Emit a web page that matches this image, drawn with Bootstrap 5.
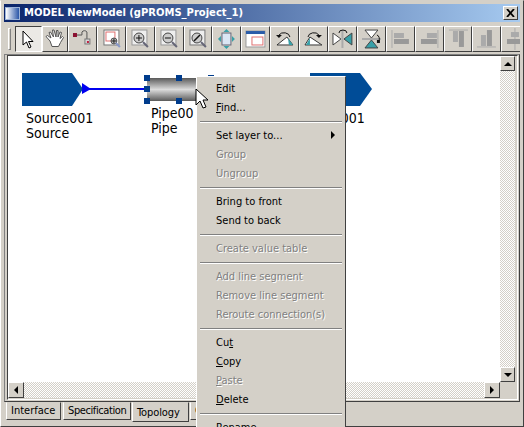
<!DOCTYPE html>
<html lang="en">
<head>
    <meta charset="UTF-8">
    <title>MODEL NewModel</title>
    <link href="https://cdn.jsdelivr.net/npm/bootstrap@5.3.3/dist/css/bootstrap.min.css" rel="stylesheet">
    <style>
        html, body { width: 524px; height: 427px; overflow: hidden; }
        body { background: #d4d0c8; font-family: "DejaVu Sans Condensed", "DejaVu Sans", sans-serif; font-size: 11px; color: #000; }
        .win { width: 524px; height: 427px; padding: 3px 3px 1px 3px; border: 1px solid; border-color: #d4d0c8 #404040 #404040 #fff; position: relative; overflow: hidden; }
        .win-title { height: 18px; padding: 0 2px 0 1px; flex: none; background: linear-gradient(90deg, #0a246a, #a6caf0); color: #fff; font-weight: 700; font-size: 11.1px; white-space: nowrap; }
        .win-ico { width: 15px; height: 13px; border: 1px solid #9db4d8; background: linear-gradient(90deg, #fff, #2a56a8); }
        .win-close { width: 15px; height: 14px; background: #d4d0c8; border: 1px solid; border-color: #fff #404040 #404040 #fff; }
        .tb { height: 32px; padding: 4px 0 2px 4px; flex: none; overflow: hidden; }
        .tb-grip { width: 3px; height: 22px; margin: 2px 4px 0 0; border: 1px solid; border-color: #fff #808080 #808080 #fff; flex: none; }
        .tb-btn { width: 28.9px; height: 26px; flex: none; display: flex; align-items: center; justify-content: center; overflow: hidden; border: 1px solid; border-color: #fff #404040 #404040 #fff; }
        .tb-on { width: 27px; background: #ebe9e5; border-color: #404040 #fff #fff #404040; }
        .tb-hand { width: 26px; }
        .panel { height: 348px; flex: none; padding: 0 1px 1px 2px; border: 1px solid; border-color: #808080 #404040 #404040 #808080; }
        .panel-in { height: 100%; padding: 0 2px 1px 0; border: 1px solid; border-color: #404040 #fff #fff #404040; background: #d4d0c8; position: relative; }
        .canvas { flex: 1 1 auto; background: #fff; position: relative; min-width: 0; overflow: hidden; }
        .sb-v { width: 15px; flex: none; background: #fff; }
        .sb-h { height: 16px; flex: none; }
        .sb-track { flex: 1 1 auto; background: repeating-conic-gradient(#d4d0c8 0 25%, #fff 0 50%) 0 0 / 2px 2px; }
        .sb-btn { width: 16px; height: 15px; flex: none; background: #d4d0c8; border: 1px solid; border-color: #fff #404040 #404040 #fff; }
        .sb-btn-h { height: 16px; }
        .sb-corner { width: 15px; background: #d4d0c8; flex: none; }
        .node-arrow { position: absolute; left: 14px; top: 17px; }
        .wire { position: absolute; left: 0; top: 0; }
        .lbl { position: absolute; font-size: 14px; line-height: 15px; white-space: nowrap; }
        .pipe { position: absolute; left: 139px; top: 22px; width: 49px; height: 23px; background: linear-gradient(180deg, #5a5a5a, #dcdcdc 50%, #5a5a5a); }
        .hnd { position: absolute; width: 6px; height: 6px; background: #003c8c; }
        .tabs { height: 22px; padding-left: 2px; }
        .tab-i { padding: 0 4px; height: 18px; margin-right: 1px; border: 1px solid; border-color: #d4d0c8 #404040 #404040 #fff; white-space: nowrap; }
        .tab-first { width: 55px; margin-right: 2px; }
        .tab-spec { width: 68px; letter-spacing: -.4px; }
        .tab-on { width: 57px; height: 20px; padding-top: 2px; letter-spacing: -.1px; }
        .ctx { position: absolute; left: 196px; top: 76px; width: 150px; height: 370px; padding: 2px; background: #d4d0c8; border: 1px solid; border-color: #fff #404040 #404040 #fff; z-index: 5; }
        .ctx-i { height: 19px; line-height: 19px; padding-left: 17px; position: relative; white-space: nowrap; }
        .ctx-off { color: #808080; text-shadow: 1px 1px 0 #fff; }
        .ctx-sep { height: 2px; margin: 3.5px 1px; border-top: 1px solid #808080; border-bottom: 1px solid #fff; }
        .ctx-arr { position: absolute; right: 8px; top: 5px; width: 0; height: 0; border-left: 4px solid #000; border-top: 4px solid transparent; border-bottom: 4px solid transparent; }
        .cursor { position: absolute; left: 195px; top: 88px; z-index: 6; }
    </style>
</head>
<body>
    <div class="win d-flex flex-column">
        <div class="win-title d-flex align-items-center gap-1">
            <span class="win-ico"></span>
            <span class="flex-grow-1">MODEL NewModel (gPROMS_Project_1)</span>
            <span class="win-close d-flex align-items-center justify-content-center">
                <svg width="9" height="8" viewBox="0 0 9 8"><path d="M1 0l7 8M8 0L1 8" stroke="#000" stroke-width="1.800" fill="none"/></svg>
            </span>
        </div>

        <div class="tb d-flex">
            <div class="tb-grip"></div>
            <div class="tb-btn tb-on"><svg width="25" height="24" viewBox="0 0 25 24"><path d="M7 4v14l3.500-3 2.500 6 2-1-2.500-5.500H17z" fill="#fff" stroke="#000"/></svg></div>
            <div class="tb-btn tb-hand"><svg width="24" height="24" viewBox="0 0 24 24"><path d="M7 14L3 9.500l1.500-1L8 11 6 5.500 7.500 5l3 5-1-7H11l2 7 .5-6.500H15V10l2-5 1.500.5-1.500 6 2.500-2 1 1-3 5-2 4H9z" fill="#fff" stroke="#555"/></svg></div>
            <div class="tb-btn"><svg width="27" height="24" viewBox="0 0 27 24"><path d="M7 8h6v-3a3 3 0 0 1 5 0v8" fill="none" stroke="#555"/><rect x="4" y="6" width="4" height="4" fill="#8a1030"/><rect x="16" y="12" width="5" height="5" fill="#d8d8d8" stroke="#777"/><rect x="18" y="14" width="2" height="2" fill="#c02040"/></svg></div>
            <div class="tb-btn"><svg width="27" height="24" viewBox="0 0 27 24"><rect x="6" y="3" width="15" height="15" fill="#fff" stroke="#777"/><rect x="8" y="5" width="9" height="9" fill="#fff" stroke="#e07070"/><circle cx="16" cy="14" r="3" fill="#bbb" stroke="#555"/><path d="M13.500 14h5M16 11.500v5" stroke="#222"/><path d="M18 16l4 4" stroke="#8898c8" stroke-width="2"/></svg></div>
            <div class="tb-btn"><svg width="27" height="24" viewBox="0 0 27 24"><rect x="5" y="3" width="15" height="15" fill="#eee" stroke="#999"/><circle cx="12" cy="11" r="5" fill="#ccc" stroke="#444"/><path d="M9 11h6M12 8v6" stroke="#111"/><path d="M16 15l5 5" stroke="#667" stroke-width="2"/></svg></div>
            <div class="tb-btn"><svg width="27" height="24" viewBox="0 0 27 24"><rect x="5" y="3" width="15" height="15" fill="#eee" stroke="#999"/><circle cx="12" cy="11" r="5" fill="#ccc" stroke="#444"/><path d="M9 11h6" stroke="#111"/><path d="M16 15l5 5" stroke="#667" stroke-width="2"/></svg></div>
            <div class="tb-btn"><svg width="27" height="24" viewBox="0 0 27 24"><rect x="5" y="3" width="15" height="15" fill="#eee" stroke="#777"/><circle cx="12" cy="11" r="5" fill="#ccc" stroke="#444"/><path d="M9 14l6-6" stroke="#111" stroke-width="1.500"/><path d="M16 15l5 5" stroke="#667" stroke-width="2"/></svg></div>
            <div class="tb-btn"><svg width="27" height="24" viewBox="0 0 27 24"><rect x="9" y="6" width="9" height="12" fill="#dbe6f4" stroke="#667"/><path d="M13.500 2l3 3h-6zM13.500 22l3-3h-6zM5 12l3-3v6zM22 12l-3-3v6z" fill="#38a0a8"/></svg></div>
            <div class="tb-btn"><svg width="27" height="24" viewBox="0 0 27 24"><rect x="4" y="4" width="19" height="16" fill="#fff" stroke="#999"/><rect x="4" y="4" width="19" height="3" fill="#2a5ca8"/><rect x="10" y="10" width="11" height="8" fill="#fff" stroke="#e07070"/></svg></div>
            <div class="tb-btn"><svg width="27" height="24" viewBox="0 0 27 24"><path d="M6 18l10-8 6 8z" fill="#fff" stroke="#333"/><path d="M17 11l5 7h-4z" fill="#38a0a8"/><path d="M8 8a6 5 0 0 1 11 2" fill="none" stroke="#111"/><path d="M5 8h6L8 11z" fill="#111"/></svg></div>
            <div class="tb-btn"><svg width="27" height="24" viewBox="0 0 27 24"><path d="M5 18l5-8 12 8z" fill="#fff" stroke="#333"/><path d="M6 18l4-7v7z" fill="#38a0a8"/><path d="M8 10a6 5 0 0 1 11-2" fill="none" stroke="#111"/><path d="M16 8h6l-3 3z" fill="#111"/></svg></div>
            <div class="tb-btn"><svg width="27" height="24" viewBox="0 0 27 24"><path d="M13.500 3v18" stroke="#aaa" stroke-width="2"/><path d="M4 6l8 6-8 6z" fill="#fff" stroke="#444"/><path d="M23 6l-8 6 8 6z" fill="#38a0a8" stroke="#444"/><path d="M10 6a4 3 0 0 1 8 0" fill="none" stroke="#111"/></svg></div>
            <div class="tb-btn"><svg width="27" height="24" viewBox="0 0 27 24"><path d="M4 12h19" stroke="#aaa" stroke-width="2"/><path d="M7 3h13l-6.500 8z" fill="#fff" stroke="#444"/><path d="M7 21h13l-6.500-8z" fill="#38a0a8" stroke="#444"/><path d="M19 8a3 4 0 0 1 2 6" fill="none" stroke="#111"/><rect x="19" y="13" width="3" height="3" fill="#111"/></svg></div>
            <div class="tb-btn"><svg width="27" height="24" viewBox="0 0 27 24"><path d="M5 3v18" stroke="#aaa"/><rect x="7" y="6" width="10" height="5" fill="#aaa"/><rect x="7" y="12" width="15" height="5" fill="#999"/></svg></div>
            <div class="tb-btn"><svg width="27" height="24" viewBox="0 0 27 24"><path d="M22 3v18" stroke="#aaa"/><rect x="11" y="6" width="10" height="5" fill="#aaa"/><rect x="5" y="12" width="16" height="5" fill="#999"/></svg></div>
            <div class="tb-btn"><svg width="27" height="24" viewBox="0 0 27 24"><path d="M4 3h19" stroke="#aaa"/><rect x="8" y="4" width="5" height="11" fill="#aaa"/><rect x="14" y="4" width="5" height="16" fill="#999"/></svg></div>
            <div class="tb-btn"><svg width="27" height="24" viewBox="0 0 27 24"><path d="M4 20h19" stroke="#aaa"/><rect x="8" y="8" width="5" height="11" fill="#aaa"/><rect x="14" y="3" width="5" height="16" fill="#999"/></svg></div>
            <div class="tb-btn"><svg width="27" height="24" viewBox="0 0 27 24"><path d="M13 1v22" stroke="#aaa"/><rect x="9" y="5" width="8" height="5" fill="#aaa"/><rect x="5" y="12" width="16" height="5" fill="#999"/></svg></div>
        </div>

        <div class="panel">
            <div class="panel-in d-flex flex-column">
                <div class="d-flex flex-grow-1" style="min-height:0">
                    <div class="canvas">
                        <svg class="node-arrow" width="62" height="33" viewBox="0 0 62 33"><path d="M0 0h50l11 16-11 17H0z" fill="#004c97"/></svg>
                        <svg class="wire" width="150" height="60" viewBox="0 0 150 60"><path d="M74 27l9 6-9 5z" fill="#0000f0"/><path d="M80 33h64" stroke="#0000f0" stroke-width="2"/></svg>
                        <span class="lbl" style="left:18px;top:55px">Source001<br>Source</span>
                        <div class="pipe"></div>
                        <span class="hnd" style="left:136px;top:19px"></span>
                        <span class="hnd" style="left:168px;top:19px"></span>
                        <span class="hnd" style="left:200px;top:19px"></span>
                        <span class="hnd" style="left:136px;top:30px"></span>
                        <span class="hnd" style="left:136px;top:42px"></span>
                        <span class="hnd" style="left:168px;top:42px"></span>
                        <span class="lbl" style="left:143px;top:50px">Pipe00<br>Pipe</span>
                        <svg class="node-arrow" style="left:302px" width="62" height="33" viewBox="0 0 62 33"><path d="M0 0h50l12 16-12 17H0z" fill="#004c97"/></svg>
                        <span class="lbl" style="left:306px;top:55px">Sink001</span>
                    </div>
                    <div class="sb-v d-flex flex-column">
                        <div class="sb-btn d-flex align-items-center justify-content-center" style="width:15px"><span style="border-bottom:4px solid #000;border-left:4px solid transparent;border-right:4px solid transparent"></span></div>
                        <div class="sb-track"></div>
                        <div class="sb-btn d-flex align-items-center justify-content-center" style="width:15px"><span style="border-top:4px solid #000;border-left:4px solid transparent;border-right:4px solid transparent"></span></div>
                    </div>
                </div>
                <div class="sb-h d-flex">
                    <div class="sb-btn sb-btn-h d-flex align-items-center justify-content-center"><span style="border-right:4px solid #000;border-top:4px solid transparent;border-bottom:4px solid transparent"></span></div>
                    <div class="sb-track"></div>
                    <div class="sb-btn sb-btn-h d-flex align-items-center justify-content-center"><span style="border-left:4px solid #000;border-top:4px solid transparent;border-bottom:4px solid transparent"></span></div>
                    <div class="sb-corner"></div>
                </div>
            </div>
        </div>

        <div class="tabs d-flex align-items-start">
            <div class="tab-i tab-first">Interface</div>
            <div class="tab-i tab-spec">Specification</div>
            <div class="tab-i tab-on">Topology</div>
            <div class="tab-i">Code</div>
        </div>
    </div>

    <div class="ctx">
        <div class="ctx-i">Edit</div>
        <div class="ctx-i"><u>F</u>ind...</div>
        <div class="ctx-sep"></div>
        <div class="ctx-i">Set layer to...<span class="ctx-arr"></span></div>
        <div class="ctx-i ctx-off">Group</div>
        <div class="ctx-i ctx-off">Ungroup</div>
        <div class="ctx-sep"></div>
        <div class="ctx-i">Bring to front</div>
        <div class="ctx-i">Send to back</div>
        <div class="ctx-sep"></div>
        <div class="ctx-i ctx-off">Create value table</div>
        <div class="ctx-sep"></div>
        <div class="ctx-i ctx-off">Add line segment</div>
        <div class="ctx-i ctx-off">Remove line segment</div>
        <div class="ctx-i ctx-off">Reroute connection(s)</div>
        <div class="ctx-sep"></div>
        <div class="ctx-i">Cu<u>t</u></div>
        <div class="ctx-i"><u>C</u>opy</div>
        <div class="ctx-i ctx-off"><u>P</u>aste</div>
        <div class="ctx-i"><u>D</u>elete</div>
        <div class="ctx-sep"></div>
        <div class="ctx-i">Rename</div>
    </div>

    <svg class="cursor" width="14" height="22" viewBox="0 0 14 22"><path d="M1 1v16l4-4 3 7 3-1-3-7h5z" fill="#fff" stroke="#000"/></svg>
</body>
</html>
